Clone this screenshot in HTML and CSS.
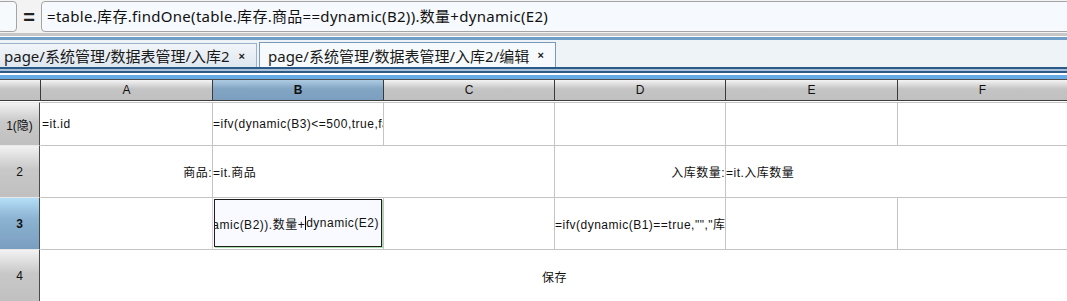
FILE: index.html
```html
<!DOCTYPE html>
<html lang="zh-CN">
<head>
    <meta charset="UTF-8">
    <title>表单设计 - 入库2/编辑</title>
    <link rel="stylesheet" href="styles.css">
</head>
<body>
    <div class="formula-bar">
        <div class="name-box"></div>
        <span class="eq">=</span>
        <div class="formula-input">=table.库存.findOne(table.库存.商品==dynamic(B2)).数量+dynamic(E2)</div>
    </div>
    <div class="band"></div>

    <div class="tab-strip">
        <div class="tabs">
            <div class="tab">page/系统管理/数据表管理/入库2<span class="close">×</span></div>
            <div class="tab active">page/系统管理/数据表管理/入库2/编辑<span class="close">×</span></div>
        </div>
        <div class="tab-rule"></div>
    </div>

    <div class="sheet">
        <div class="col-head">
            <div class="corner"></div>
            <div class="col">A</div>
            <div class="col selected">B</div>
            <div class="col">C</div>
            <div class="col">D</div>
            <div class="col">E</div>
            <div class="col">F</div>
        </div>

        <div class="grid">
            <!-- row 1 -->
            <div class="row-head first">1(隐)</div>
            <div class="cell first a">=it.id</div>
            <div class="cell first">=ifv(dynamic(B3)&lt;=500,true,false)</div>
            <div class="cell first"></div>
            <div class="cell first"></div>
            <div class="cell first"></div>
            <div class="cell first"></div>

            <!-- row 2 -->
            <div class="row-head">2</div>
            <div class="cell a right">商品:</div>
            <div class="cell span2">=it.商品</div>
            <div class="cell right">入库数量:</div>
            <div class="cell span2">=it.入库数量</div>

            <!-- row 3 -->
            <div class="row-head current">3</div>
            <div class="cell a"></div>
            <div class="cell editing">
                <div class="editor">=table.库存.findOne(table.库存.商品==dynamic(B2)).数量+<span class="caret">dynamic(E2)</span></div>
            </div>
            <div class="cell"></div>
            <div class="cell">=ifv(dynamic(B1)==true,"","库存不足")</div>
            <div class="cell"></div>
            <div class="cell"></div>

            <!-- row 4 -->
            <div class="row-head last">4</div>
            <div class="cell a last span6 center">保存</div>
        </div>
    </div>
</body>
</html>
```

FILE: styles.css
```css
body {
    margin: 0;
    width: 1067px;
    height: 301px;
    overflow: hidden;
    background-color: #ffffff;
    font-family: "Liberation Sans", "Noto Sans CJK SC", sans-serif;
    color: #111111;
}

/* formula bar */
.formula-bar {
    display: flex;
    align-items: center;
    height: 33px;
    background-color: #f3f3f3;
}
.name-box {
    flex-shrink: 0;
    width: 20px;
    height: 31px;
    margin-left: -3px;
    box-sizing: border-box;
    border: 1px solid #a4a4a4;
    border-radius: 4px;
    background-color: #f7fafd;
}
.eq {
    flex-shrink: 0;
    width: 24px;
    text-align: center;
    font-size: 20px;
    font-weight: bold;
    line-height: 1;
    color: #222222;
}
.formula-input {
    flex-shrink: 0;
    width: 1040px;
    height: 31px;
    box-sizing: border-box;
    padding-left: 5px;
    border: 1px solid #a4a4a4;
    border-radius: 4px;
    background-color: #f6f9fd;
    font-family: "Noto Sans", "Noto Sans CJK SC", sans-serif;
    font-size: 15px;
    letter-spacing: 0.3px;
    line-height: 29px;
    white-space: nowrap;
}
.band {
    height: 3px;
    border-bottom: 1px solid #ffffff;
    background-color: #c6c6c6;
}

/* tabs */
.tab-strip {
    border-top: 3px solid #6f9fc9;
    background-color: #eef3f8;
}
.tabs {
    display: flex;
    align-items: flex-end;
    height: 27px;
}
.tab {
    display: flex;
    align-items: center;
    width: 258px;
    height: 24px;
    box-sizing: border-box;
    padding: 0 11px 0 4px;
    margin-left: -1px;
    border: 1px solid #9cb2c8;
    border-bottom: none;
    background: linear-gradient(#f1f5f9, #dfe7ef);
    font-family: "Noto Sans", "Noto Sans CJK SC", sans-serif;
    font-size: 15px;
    color: #1a1a1a;
    white-space: nowrap;
}
.tab.active {
    width: 297px;
    height: 25px;
    margin-left: 2px;
    padding-left: 8px;
    border-color: #7a99b8;
    background: #f7fafd;
}
.close {
    margin-left: auto;
    font-family: "Liberation Sans", sans-serif;
    font-size: 11px;
    font-weight: bold;
}
.tab-rule {
    height: 13px;
    background: linear-gradient(#2c5a88 0, #2c5a88 2px, #a9c2da 2px, #a9c2da 4px,
        #2d5a86 4px, #2d5a86 6px, #ffffff 6px, #ffffff 8px,
        #66aae6 8px, #66aae6 12px, #505050 12px);
}

/* sheet */
.col-head,
.grid {
    display: grid;
    grid-template-columns: 40px 172px 171px 171px 171px 172px 1fr;
}
.col-head {
    height: 20px;
    border-bottom: 1px solid #3c3c3c;
    margin-bottom: 1px;
}
.corner,
.col {
    background: linear-gradient(#f4f4f4, #c4c4c4 45%, #c0c0c0);
}
.col {
    border-left: 1px solid #3a3a3a;
    font-size: 12px;
    line-height: 20px;
    text-align: center;
}
.col.selected {
    background: linear-gradient(#aecbe2, #82a5c4 45%, #7c9fc0);
    font-weight: bold;
}

.grid {
    grid-template-rows: 44px 52px 52px 52px;
}
.row-head {
    display: flex;
    align-items: center;
    justify-content: center;
    border-right: 1px solid #4a4a4a;
    border-bottom: 1px solid #e8e8e8;
    background: linear-gradient(#f2f2f2, #c8c8c8 45%, #c0c0c0);
    font-size: 12px;
}
.row-head.first {
    border-top: 1px solid #e8e8e8;
}
.row-head.current {
    background: linear-gradient(#b4def8, #8cb3d2 40%, #7a9ec0);
    font-weight: bold;
}
.row-head.last {
    border-bottom: none;
}

.cell {
    display: flex;
    align-items: center;
    min-width: 0;
    overflow: hidden;
    border-left: 1px solid #c4c4c4;
    border-bottom: 1px solid #c4c4c4;
    font-size: 12px;
    letter-spacing: 0.5px;
    white-space: nowrap;
}
.cell.a {
    border-left-color: #ffffff;
    padding-left: 1px;
}
.cell.first {
    border-top: 1px solid #c4c4c4;
}
.cell.right {
    justify-content: flex-end;
}
.cell.center {
    justify-content: center;
}
.cell.span2 {
    grid-column: span 2;
}
.cell.span6 {
    grid-column: span 6;
}
.cell.last {
    border-bottom: none;
}
.cell.editing {
    display: block;
    padding: 1px;
    border-left-color: #e4c8e4;
}
.editor {
    display: flex;
    align-items: center;
    justify-content: flex-end;
    height: 48px;
    box-sizing: border-box;
    padding-right: 2px;
    overflow: hidden;
    border: 1px solid #1e1e1e;
    box-shadow: 1px 1px 0 #a8dca8;
    background-color: #f8faff;
}
.caret {
    border-left: 1px solid #000000;
}
```
